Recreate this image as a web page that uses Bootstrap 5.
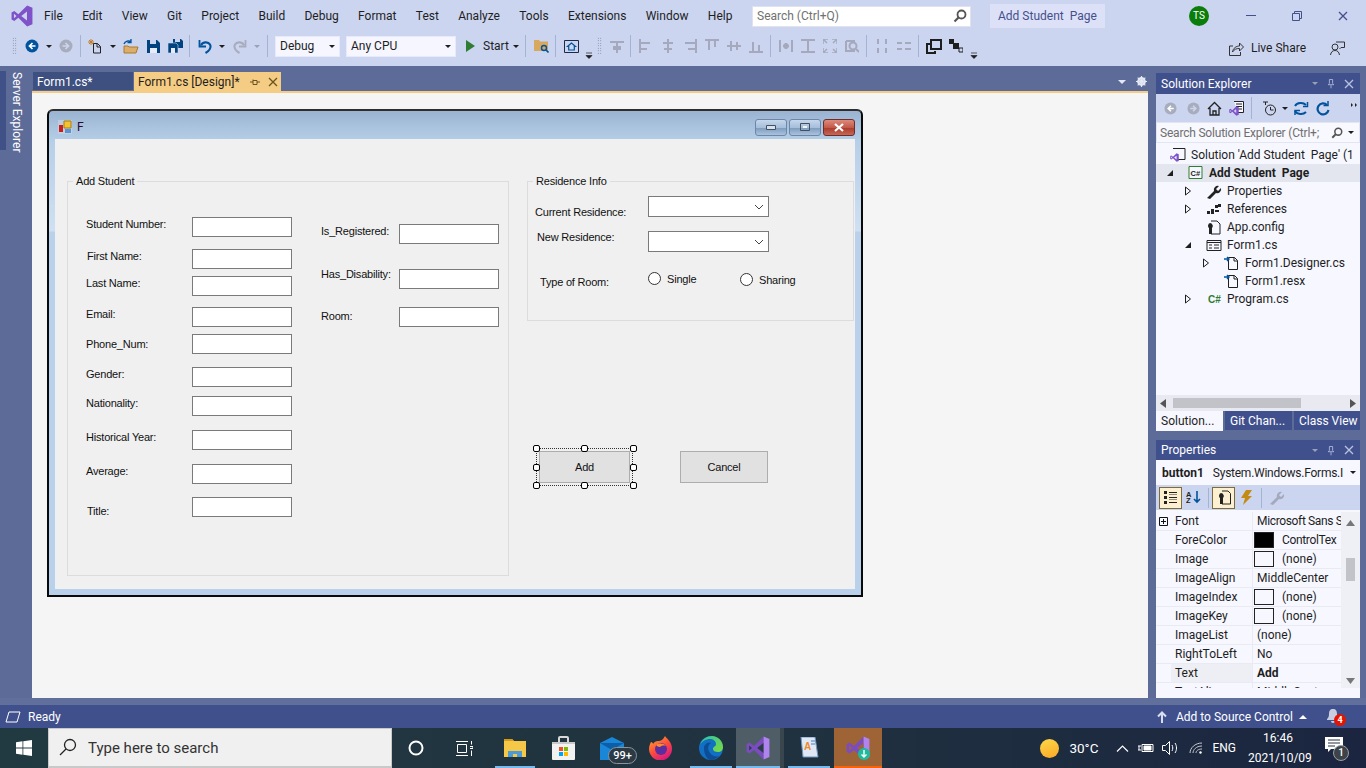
<!DOCTYPE html>
<html lang="en">
<head>
<meta charset="utf-8">
<title>Add Student Page - Visual Studio</title>
<link href="https://cdn.jsdelivr.net/npm/bootstrap@5.3.0/dist/css/bootstrap.min.css" rel="stylesheet">
<style>
html,body{margin:0;height:768px;overflow:hidden}
body{font-family:Roboto,"Noto Sans",sans-serif;font-size:12px;line-height:16px;color:#1e1e1e;background:#5d6b99}
svg{display:block;flex:none}
.vs-app{width:1366px;height:768px}
.menu-row{height:32px;background:#ccd5f0;padding-left:11px;flex:none}
.menu-items{margin-left:11px;gap:19.3px;flex:none;width:708px}
.search-q{width:219px;height:21px;margin-left:0;background:#fff;border:1px solid #e0e3ef;color:#717171;padding:0 3px 0 4px;flex:none}
.title-chip{width:115px;height:24px;margin-left:19px;background:#dde1f8;color:#44508c;padding-left:8px;flex:none}
.avatar{width:20px;height:20px;margin-left:84px;border-radius:50%;background:#0b7d0b;color:#fff;font-size:10px;flex:none}
.win-btn{width:46px;height:32px;flex:none}
.win-first{margin-left:19px}
.tool-row{height:34px;background:#ccd5f0;padding-bottom:6px;flex:none}
.cw1{width:1px}.cw2{width:2px}.cw3{width:3px}.cw4{width:4px}.cw5{width:5px}.cw6{width:6px}.cw7{width:7px}.cw10{width:10px}.cw12{width:12px}.cw14{width:14px}.cw16{width:16px}.cw18{width:18px}.cw20{width:20px}.cw22{width:22px}.cw26{width:26px}
.cw1,.cw2,.cw3,.cw4,.cw5,.cw6,.cw7,.cw10,.cw12,.cw14,.cw16,.cw18,.cw20,.cw22,.cw26{flex:none}
.tcell{height:28px;flex:none}
.tsep{width:1px;height:22px;background:#a5b3d3;flex:none}
.grip{width:5px;height:18px;flex:none;background-image:radial-gradient(#6f7a9a 35%,transparent 40%);background-size:2.5px 2.5px}
.combo{height:21px;background:#f5f6ff;border:1px solid #e6eafa;flex:none;padding:0 4px}
.combo-a{width:65px}.combo-b{width:110px}
.drop{width:0;height:0;border-left:3px solid transparent;border-right:3px solid transparent;border-top:3px solid #1e1e1e;flex:none}
.drop-g{border-top-color:#9aa0b5}
.drop-w{border-left-width:4px;border-right-width:4px;border-top:4px solid #e4e8f5}
.start-txt{width:26px;flex:none}
.live-txt{margin:0 24px 0 7px}
.feedback{margin-right:21px}
.overflow-mark{margin-right:3px}
.share{margin-top:4px}
.main-row{height:632px;flex:none}
.left-strip{width:32px;padding-top:5px;flex:none}
.strip-tab{width:6px;height:79px;background:#3f5186}
.strip-txt{writing-mode:vertical-rl;color:#fff;margin:1px 0 0 4px;line-height:14px}
.center-col{width:1116px;margin-right:8px;flex:none}
.tabs-row{height:25px;padding-top:6px;flex:none}
.doc-tab{height:19px;padding:1px 0 0 4px;flex:none}
.doc-a{width:100px;background:#3d5080;color:#fff;margin:0 1px 0 1px;height:18px}
.doc-b{width:147px;background:#f5cc84;color:#1e1e1e;height:19px}
.doc-b .x-pin{margin-left:10px}
.doc-b .x-cl{margin-left:8px}
.tabs-end{margin-right:1px;gap:10px}
.doc-area{height:607px;background:#f5f5f5;border-top:2px solid #f5cc84;padding:16px 0 0 15px;flex:none}
.winform{width:816px;height:488px;border:2px solid #0a0a0a;border-top-color:#2e2e2e;border-radius:6px 6px 0 0;padding:0 6px 6px;background:linear-gradient(#9ab3d1 0,#b6cfe8 30px,#cfe0f2 120px,#b9d1ea 121px)}
.form-title{height:28px;padding:4px 0 0 3px}
.form-f{margin-left:5px;color:#2a0a2a}
.wb{width:32px;height:17px;margin-right:2px;border:1px solid #6e87a8;border-radius:3px;background:linear-gradient(#c5d7ec,#a6bfdb 50%,#7d9abb 51%,#a9c3de)}
.wb-close{background:linear-gradient(#dd8a7c,#c45a49 50%,#a93a2a 51%,#c56757);border-color:#6f2d2a;margin-right:0}
.client{height:450px;background:#f0f0f0;position:relative;font-family:"Liberation Sans",Arial,sans-serif;font-size:11px;letter-spacing:-.2px;line-height:14px;color:#111}
.gbox{position:absolute;border:1px solid #dcdcdc;top:42px}
.g1{left:12px;width:442px;height:395px}
.g2{left:472px;width:327px;height:140px}
.gleg{position:absolute;top:-8px;left:5px;background:#f0f0f0;padding:0 3px}
.lb,.tx,.cb,.rd,.fbtn,.hd,.seln{position:absolute}
.tx{width:100px;height:20px;background:#fff;border:1px solid #7a7a7a}
.cb{left:593px;width:121px;height:21px;background:#fff;border:1px solid #7a7a7a}
.cb svg{position:absolute;right:4px;top:7px}
.rd{width:13px;height:13px;border-radius:50%;border:1px solid #333;background:#fff}
.fbtn{top:312px;height:32px;background:#e1e1e1;border:1px solid #adadad;color:#111}
.seln{left:481px;top:309px;width:97px;height:38px;border:1px dotted #333}
.hd{width:7px;height:7px;background:#fff;border:1px solid #000;border-radius:2px}
.xl1{left:31px}.xl2{left:32px}.xr{left:266px}.xt{left:137px}.xs{left:344px}
.ya{top:78px}.yb{top:110px}.yc{top:137px}.yd{top:168px}.ye{top:195px}.yf{top:228px}.yg{top:257px}.yh{top:291px}.yi{top:325px}.yj{top:358px}
.yr1{top:85px}.yr2{top:130px}.yr3{top:168px}
.la{top:78px}.lb2{top:110px}.lc{top:137px}.ld{top:168px}.le{top:198px}.lf{top:228px}.lg{top:257px}.lh{top:291px}.li{top:325px}.lj{top:365px}
.lr1{top:85px}.lr2{top:128px}.lr3{top:170px}
.l-cur{left:480px;top:66px}.l-new{left:482px;top:91px}.l-typ{left:485px;top:136px}
.cb1{top:57px}.cb2{top:92px}
.rd1{left:593px;top:133px}.rd2{left:685px;top:134px}
.l-sin{left:612px;top:133px}.l-sha{left:704px;top:134px}
.b-add{left:484px;width:91px}.b-can{left:625px;width:88px}
.h1{left:478px;top:306px}.h2{left:526px;top:306px}.h3{left:575px;top:306px}
.h4{left:478px;top:325px}.h5{left:575px;top:325px}
.h6{left:478px;top:343px}.h7{left:526px;top:343px}.h8{left:575px;top:343px}
.side{width:204px;padding-top:7px;flex:none}
.ptitle{height:21px;background:#40508d;color:#fff;padding:0 5px;flex:none}
.ptitle-b{height:20px}
.ptitle-ic{gap:9px;margin-right:1px}
.se-bar{height:28px;background:#ccd5f0;padding-left:8px;flex:none}
.se-search{height:21px;background:#f8f8ff;border:1px solid #e3e6f2;color:#6f6f6f;padding:0 2px 0 3px;white-space:nowrap;overflow:hidden;flex:none}
.se-search span.q{width:163px;overflow:hidden;flex:none;letter-spacing:-.2px}
.tree{height:252px;background:#f6f7ff;color:#1e1e1e;white-space:nowrap;overflow:hidden;padding-top:3px;flex:none}
.trow{height:18px;flex:none;overflow:hidden}
.trow-sel{background:#e4e6ef;font-weight:700}
.tr-tog{width:8px;flex:none}
.ticon{width:16px;flex:none}
.tname{margin-left:5px}
.hbar{height:16px;background:#e9eaf1;padding:0 4px;flex:none}
.hthumb{width:128px;height:10px;background:#c2c3c9;margin-left:7px}
.hspace{flex:1 1 auto}
.stabs{height:20px;gap:2px;flex:none}
.stab{background:#40508d;color:#fff;height:19px;padding-left:5px;flex:none;white-space:nowrap}
.st1{width:67px;background:#f6f7ff;color:#1e1e1e;height:20px}
.st2{width:67px;margin-left:0}.st3{width:66px}
.props-gap{height:9px;flex:none}
.obj-row{height:25px;background:#f6f7ff;padding-left:6px;white-space:nowrap;overflow:hidden;flex:none}
.obj-row b{margin-right:9px}
.obj-row span.tp{width:134px;overflow:hidden;flex:none;letter-spacing:-.25px}
.pbar{height:25px;background:#ccd5f0;padding-left:3px;flex:none}
.pbtn{width:23px;height:22px;flex:none}
.pbtn-on{background:#fdf0d0;border:1px solid #7d6c3a}
.ptsep{width:1px;height:20px;background:#a5b3d3;margin:0 3px;flex:none}
.pgrid{height:178px;background:#f6f7ff;padding-top:2px;overflow:hidden;flex:none}
.pg-left{width:185px;flex:none;overflow:hidden}
.prow{height:19px;flex:none;border-bottom:1px solid #eaebf2;overflow:hidden;white-space:nowrap}
.pgut{width:15px;flex:none;background:#f6f7ff}
.pn{width:82px;flex:none;padding-left:4px;border-right:1px solid #eaebf2;height:18px;line-height:18px}
.pv{width:88px;flex:none;overflow:hidden;padding-left:4px;height:18px;line-height:18px}
.pv-sw{padding-left:1px}
.pv-tight{letter-spacing:-.35px}
.pn-sel{background:#eeeff4}
.pv-sel{font-weight:700}
.sw{width:20px;height:16px;border:1px solid #222;background:#f6f7ff;flex:none;margin-right:8px}
.sw-k{background:#000}
.pscroll{width:19px;flex:none;background:#eef0f6}
.pthumb{width:9px;height:23px;background:#c2c3c9;margin-top:32px}
.pfoot{height:10px;background:#f6f7ff;flex:none}
.status-gap{height:7px;background:#606f9c;flex:none}
.status{height:23px;background:#40508d;color:#fff;padding:0 0 0 5px;flex:none}
.st-ready{margin-left:7px}
.st-src{margin:0 6px 0 9px}
.bell{margin:0 26px 0 19px;position:relative}
.bell-b{position:absolute;left:8px;top:5px;width:12px;height:12px;border-radius:50%;background:#e51400;font-size:9px;line-height:12px;font-weight:700;text-align:center}
.taskbar{height:40px;background:linear-gradient(90deg,#213a42,#20323f 55%,#1b2540);color:#fff;padding:0;flex:none}
.tb-start{width:48px;flex:none}
.tb-search{width:344px;height:40px;background:#f0f0f0;border:1px solid #c9c9c9;border-bottom-width:2px;color:#333;font-size:15px;padding-left:39px;position:relative;flex:none}
.tb-search svg{position:absolute;left:10px;top:9px}
.tk{height:40px;flex:none;position:relative}
.tk48{width:48px}.tk49{width:49px}.tk50{width:50px}.tk44{width:44px}.tk4{width:4px}
.ul::after{content:"";position:absolute;left:4px;right:4px;bottom:0;height:2px;background:#76b9ed}
.ul-wide::after{left:0;right:-2px}
.tk-act{background:#4f5e66}
.tk-sep{background:#3a464e}
.tk-org{background:#9f6436}
.tk-org::after{content:"";position:absolute;left:0;right:0;bottom:0;height:2px;background:#f7630c}
.bdg99{position:absolute;left:21px;top:19px;width:29px;height:17px;border-radius:9px;background:#2b3a45;border:1px solid #8b949a;font-size:11px;line-height:15px;text-align:center;font-weight:500;color:#fff}
.sun{width:19px;height:19px;border-radius:50%;background:linear-gradient(160deg,#ffd84a,#f9a825);flex:none}
.temp{margin-left:10px;font-size:13.5px}
.gap-l18{margin-left:18px}
.gap-r8{margin-right:8px}.gap-r9{margin-right:9px}.gap-r11{margin-right:11px}
.clock{width:60px;text-align:center;font-size:12px;line-height:20px;margin-left:12px;flex:none}
.noti{position:relative;width:22px;height:22px;margin:0 19px 0 17px;flex:none}
.noti-b{position:absolute;left:8px;top:8px;width:16px;height:16px;border-radius:50%;background:#3d4348;border:1px solid #9aa0a4;font-size:10px;line-height:14px;text-align:center;font-weight:500}
.nowrap{white-space:nowrap}
</style>
</head>
<body>
<svg width="0" height="0" class="position-absolute">
  <symbol id="vs" viewBox="0 0 24 24"><path d="M17.6.6 8 10 3.6 6.6.6 8.2v7.600l3 1.600L8 14l9.600 9.400 5.800-2.400V3zM17.400 7v10l-6.200-5zM3.200 9.600 6 12l-2.800 2.400z"/></symbol>
  <symbol id="doc" viewBox="0 0 16 16"><path d="M4.500 2.500h6l3 3v9h-9z" fill="#f6f7ff" stroke="#1e1e1e"/><path d="M10 2.500v3.500h3.500" fill="none" stroke="#1e1e1e"/><path d="M0 4h5M3 2l2 2-2 2" fill="none" stroke="#00539c" stroke-width="1.400"/></symbol>
  <symbol id="tgr" viewBox="0 0 8 10"><path d="M1.500 1l5 4-5 4z" fill="#f6f7ff" stroke="#1e1e1e"/></symbol>
  <symbol id="tgd" viewBox="0 0 8 10"><path d="M7 2v6H1z" fill="#1e1e1e"/></symbol>
  <symbol id="pin" viewBox="0 0 10 12"><path d="M3 1h4v5l1.500 1.500h-7L3 6zM5 8v4" fill="none" stroke="currentColor"/></symbol>
  <symbol id="xx" viewBox="0 0 10 10"><path d="M1 1l8 8M9 1l-8 8" stroke="currentColor" stroke-width="1.300"/></symbol>
  <symbol id="navb" viewBox="0 0 14 14"><circle cx="7" cy="7" r="6.500" fill="currentColor"/><path d="M10.500 7H5M7.500 4 4.500 7l3 3" fill="none" stroke="#fff" stroke-width="1.700"/></symbol>
  <symbol id="navf" viewBox="0 0 14 14"><circle cx="7" cy="7" r="6.500" fill="currentColor"/><path d="M3.500 7H9M6.500 4l3 3-3 3" fill="none" stroke="#ccd5f0" stroke-width="1.700"/></symbol>
  <symbol id="mag" viewBox="0 0 14 14"><circle cx="8.500" cy="5.500" r="4" fill="none" stroke="currentColor" stroke-width="1.800"/><path d="M5.500 8.500 1.500 12.500" stroke="currentColor" stroke-width="2.200"/></symbol>
  <symbol id="vsall" viewBox="0 0 24 24"><path d="M17.600.6 8 10 3.600 6.600.6 8.200v7.600l3 1.600L8 14l9.600 9.400V.6z" fill="#7a4cc0"/><path d="M17.600.6l5.800 2.400v18l-5.800 2.400z" fill="#b084ee"/><path d="M17.400 7v10l-6.200-5zM3.200 9.600 6 12l-2.800 2.400z" fill="#2a3d46"/></symbol>
</svg>
<div class="vs-app d-flex flex-column">

  <!-- menu -->
  <div class="menu-row d-flex align-items-center">
    <svg width="22" height="22" fill="#7f52c9"><use href="#vs"/></svg>
    <div class="menu-items d-flex">
      <span>File</span><span>Edit</span><span>View</span><span>Git</span><span>Project</span><span>Build</span><span>Debug</span><span>Format</span><span>Test</span><span>Analyze</span><span>Tools</span><span>Extensions</span><span>Window</span><span>Help</span>
    </div>
    <div class="search-q d-flex align-items-center justify-content-between"><span>Search (Ctrl+Q)</span><svg width="14" height="14" color="#555"><use href="#mag"/></svg></div>
    <div class="title-chip d-flex align-items-center nowrap">Add Student&nbsp; Page</div>
    <div class="avatar d-flex align-items-center justify-content-center">TS</div>
    <div class="win-btn win-first d-flex align-items-center justify-content-center"><svg width="10" height="2"><path d="M0 .5h10" stroke="#44508c"/></svg></div>
    <div class="win-btn d-flex align-items-center justify-content-center"><svg width="10" height="10" fill="none" stroke="#44508c"><path d="M.5 2.500h7v7h-7zM2.500 2.500v-2h7v7h-2"/></svg></div>
    <div class="win-btn d-flex align-items-center justify-content-center"><svg width="10" height="10" color="#44508c"><use href="#xx"/></svg></div>
  </div>

  <!-- toolbar -->
  <div class="tool-row d-flex align-items-center">
    <span class="cw12 tcell"></span><span class="grip"></span><span class="cw7 tcell"></span>
    <span class="cw16 tcell d-flex align-items-center justify-content-center"><svg width="14" height="14" color="#00539c"><use href="#navb"/></svg></span>
    <span class="cw18 tcell d-flex align-items-center justify-content-center"><span class="drop"></span></span>
    <span class="cw16 tcell d-flex align-items-center justify-content-center"><svg width="14" height="14" color="#a7adbc"><use href="#navf"/></svg></span>
    <span class="cw6 tcell"></span><span class="tsep"></span><span class="cw7 tcell"></span>
    <span class="cw16 tcell d-flex align-items-center justify-content-center"><svg width="16" height="16" fill="none" stroke="#222"><path d="M5.500 5.500h4l3 3v6.500h-7z"/><path d="M9 5.500V9h3.500"/><path d="M3 1v6M0 4h6M1 2l4 4M5 2 1 6" stroke="#c27d1a"/></svg></span>
    <span class="cw18 tcell d-flex align-items-center justify-content-center"><span class="drop"></span></span>
    <span class="cw18 tcell d-flex align-items-center justify-content-center"><svg width="16" height="15"><path d="M1 7h4l1 1h9l-2 6H1z" fill="#dcae6a" stroke="#a87a30"/><path d="M1 5c1-3 5-4 7-2M8 0v3.500H4.500" fill="none" stroke="#00539c" stroke-width="1.300"/></svg></span>
    <span class="cw26 tcell d-flex align-items-center justify-content-center"><svg width="13" height="13"><path d="M0 0h10l3 3v10H0z" fill="#00437e"/><path d="M3 0h6v4H3z" fill="#ccd5f0"/><path d="M3 8h7v5H3z" fill="#e8ecfa"/></svg></span>
    <span class="cw18 tcell d-flex align-items-center justify-content-center"><svg width="15" height="14"><path d="M5 0h8l2 2v7H5z" fill="#00437e"/><path d="M7 0h5v3H7z" fill="#ccd5f0"/><path d="M0 4h8l2 2v8H0z" fill="#00437e" stroke="#ccd5f0" stroke-width=".6"/><path d="M3 9h4v5H3z" fill="#e8ecfa"/></svg></span>
    <span class="cw5 tcell"></span><span class="tsep"></span><span class="cw7 tcell"></span>
    <span class="cw16 tcell d-flex align-items-center justify-content-center"><svg width="14" height="15" fill="none" stroke="#00539c" stroke-width="2.200"><path d="M3 6.500c1-3.500 7-4.500 9-1 1.500 3-1 6.500-4.500 8.500"/><path d="M1.500 1v6.500H8" stroke-width="1.800"/></svg></span>
    <span class="cw18 tcell d-flex align-items-center justify-content-center"><span class="drop"></span></span>
    <span class="cw18 tcell d-flex align-items-center justify-content-center"><svg width="14" height="15" fill="none" stroke="#a7adbc" stroke-width="2.200"><path d="M11 6.500c-1-3.500-7-4.500-9-1-1.500 3 1 6.500 4.500 8.500"/><path d="M12.500 1v6.500H6" stroke-width="1.800"/></svg></span>
    <span class="cw16 tcell d-flex align-items-center justify-content-center"><span class="drop drop-g"></span></span>
    <span class="cw2 tcell"></span><span class="tsep"></span><span class="cw7 tcell"></span>
    <div class="combo combo-a d-flex align-items-center justify-content-between"><span>Debug</span><span class="drop"></span></div>
    <span class="cw6 tcell"></span>
    <div class="combo combo-b d-flex align-items-center justify-content-between"><span>Any CPU</span><span class="drop"></span></div>
    <span class="cw10 tcell"></span>
    <span class="cw10 tcell d-flex align-items-center"><svg width="10" height="12"><path d="M0 0l9 6-9 6z" fill="#2e7d32"/></svg></span>
    <span class="cw7 tcell"></span>
    <span class="start-txt">Start</span>
    <span class="cw14 tcell d-flex align-items-center justify-content-center"><span class="drop"></span></span>
    <span class="cw2 tcell"></span><span class="tsep"></span><span class="cw7 tcell"></span>
    <span class="cw16 tcell d-flex align-items-center justify-content-center"><svg width="15" height="14"><path d="M0 1h5l1 1.500h8V12H0z" fill="#d8a85f"/><circle cx="10" cy="9" r="2.500" fill="none" stroke="#00539c" stroke-width="1.400"/><path d="M12 11l2.500 2.500" stroke="#00539c" stroke-width="1.600"/></svg></span>
    <span class="cw6 tcell"></span><span class="tsep"></span><span class="cw7 tcell"></span>
    <span class="cw16 tcell d-flex align-items-center justify-content-center"><svg width="15" height="13" fill="none"><path d="M.5.500h14v12H.5z" stroke="#1e2a45"/><path d="M7.500 3 3.500 6.500h1.200V10H10.300V6.500h1.200z" stroke="#00539c" stroke-width="1.200"/></svg></span>
    <span class="cw4 tcell"></span>
    <span class="cw12 tcell d-flex align-items-end justify-content-center"><svg width="8" height="16"><path d="M1 9h6M1 11.500h6l-3 3z" fill="#1e1e1e" stroke="#1e1e1e" stroke-width=".7"/></svg></span>
    <span class="cw2 tcell"></span><span class="grip"></span><span class="cw5 tcell"></span>
    <span class="cw20 tcell d-flex align-items-center justify-content-center"><svg width="14" height="14" fill="none" stroke="#a4a9bd" stroke-width="2"><path d="M0 3h14M7 3v11"/><path d="M3 7h8v4H3z" stroke-width="0" fill="#a4a9bd"/></svg></span>
    <span class="cw3 tcell"></span><span class="tsep"></span><span class="cw4 tcell"></span>
    <span class="cw22 tcell d-flex align-items-center justify-content-center"><svg width="14" height="14" fill="none" stroke="#a4a9bd" stroke-width="2"><path d="M1 0v14M2 4h9M2 10h6"/></svg></span>
    <span class="cw22 tcell d-flex align-items-center justify-content-center"><svg width="14" height="14" fill="none" stroke="#a4a9bd" stroke-width="2"><path d="M7 0v14M2 4h10M3 10h8"/></svg></span>
    <span class="cw22 tcell d-flex align-items-center justify-content-center"><svg width="14" height="14" fill="none" stroke="#a4a9bd" stroke-width="2"><path d="M13 0v14M2 4h10M5 10h7"/></svg></span>
    <span class="cw22 tcell d-flex align-items-center justify-content-center"><svg width="14" height="14" fill="none" stroke="#a4a9bd" stroke-width="2"><path d="M0 1h14M4 2v9M10 2v6"/></svg></span>
    <span class="cw22 tcell d-flex align-items-center justify-content-center"><svg width="14" height="14" fill="none" stroke="#a4a9bd" stroke-width="2"><path d="M0 7h14M4 2v10M10 3v8"/></svg></span>
    <span class="cw22 tcell d-flex align-items-center justify-content-center"><svg width="14" height="14" fill="none" stroke="#a4a9bd" stroke-width="2"><path d="M0 13h14M4 3v9M10 6v6"/></svg></span>
    <span class="cw3 tcell"></span><span class="tsep"></span><span class="cw4 tcell"></span>
    <span class="cw22 tcell d-flex align-items-center justify-content-center"><svg width="14" height="14" fill="none" stroke="#a4a9bd" stroke-width="2"><path d="M1 1v12M13 1v12M4 7h6M7 4v6M5 5l4 4M9 5 5 9"/></svg></span>
    <span class="cw22 tcell d-flex align-items-center justify-content-center"><svg width="14" height="14" fill="none" stroke="#a4a9bd" stroke-width="2"><path d="M0 1h14M0 13h14M7 2v10"/></svg></span>
    <span class="cw22 tcell d-flex align-items-center justify-content-center"><svg width="14" height="14" fill="none" stroke="#a4a9bd" stroke-width="1.500"><path d="M0 5V0h5M9 0h5v5M14 9v5H9M5 14H0V9M1 1l3 3M13 1l-3 3M13 13l-3-3M1 13l3-3"/></svg></span>
    <span class="cw22 tcell d-flex align-items-center justify-content-center"><svg width="14" height="14" fill="none" stroke="#a4a9bd" stroke-width="2"><path d="M1 2h9M1 2v10h9"/><circle cx="8" cy="7" r="3.500"/><path d="M11 10l3 3"/></svg></span>
    <span class="cw3 tcell"></span><span class="tsep"></span><span class="cw4 tcell"></span>
    <span class="cw22 tcell d-flex align-items-center justify-content-center"><svg width="14" height="14" fill="none" stroke="#a4a9bd" stroke-width="2"><path d="M3 0v5M3 9v5M11 0v5M11 9v5"/></svg></span>
    <span class="cw22 tcell d-flex align-items-center justify-content-center"><svg width="14" height="14" fill="none" stroke="#a4a9bd" stroke-width="2"><path d="M0 4h5M8 4h6M0 10h5M8 10h6"/></svg></span>
    <span class="cw3 tcell"></span><span class="tsep"></span><span class="cw4 tcell"></span>
    <span class="cw22 tcell d-flex align-items-center justify-content-center"><svg width="16" height="15" fill="none" stroke="#1e1e1e" stroke-width="2"><path d="M5 1h10v9H5z"/><path d="M4 5H1v9h8v-2"/></svg></span>
    <span class="cw22 tcell d-flex align-items-center justify-content-center"><svg width="14" height="14" fill="#1e1e1e"><path d="M0 0h5v5H0zM4 4h6v6H4z"/><path d="M10 9h4v4h-4z" fill="none" stroke="#1e1e1e"/></svg></span>
    <span class="cw14 tcell d-flex align-items-end justify-content-center"><svg width="8" height="16"><path d="M1 9h6M1 11.500h6l-3 3z" fill="#1e1e1e" stroke="#1e1e1e" stroke-width=".7"/></svg></span>
    <span class="flex-grow-1"></span>
    <svg class="share" width="15" height="15" fill="none" stroke="#333"><path d="M4 5H.5v9.500h11V11"/><path d="M3.500 11c.5-4 4-6 7-6V2l4 4-4 4V7.500c-3-.2-5.500 1-7 3.500z"/></svg>
    <span class="live-txt share nowrap">Live Share</span>
    <svg class="feedback share" width="15" height="15" fill="none" stroke="#333"><circle cx="5" cy="6" r="3"/><path d="M.5 14c.5-3 2-4.500 4.500-4.500s4 1.500 4.500 4.500M6 1h8.500v5.500H11L9.500 8"/></svg>
  </div>

  <!-- workspace -->
  <div class="main-row d-flex">
    <div class="left-strip d-flex">
      <div class="strip-tab"></div>
      <div class="strip-txt nowrap">Server Explorer</div>
    </div>

    <div class="center-col d-flex flex-column">
      <div class="tabs-row d-flex">
        <div class="doc-tab doc-a d-flex align-items-center">Form1.cs*</div>
        <div class="doc-tab doc-b d-flex align-items-center nowrap">Form1.cs [Design]*
          <svg class="x-pin" width="10" height="10" color="#6b5320" viewBox="0 0 10 10"><path d="M0 5h3M3 2.500v5h4v-4H3M7 5h3" fill="none" stroke="currentColor"/></svg>
          <svg class="x-cl" width="10" height="10" color="#6b5320"><use href="#xx"/></svg>
        </div>
        <div class="flex-grow-1"></div>
        <div class="tabs-end d-flex align-items-center">
          <span class="drop drop-w"></span>
          <svg width="11" height="11" viewBox="0 0 12 12"><circle cx="6" cy="6" r="3.500" fill="none" stroke="#e4e8f5" stroke-width="2.600"/><path d="M6 0v12M0 6h12M1.800 1.800l8.400 8.400M10.200 1.800l-8.400 8.400" stroke="#e4e8f5" stroke-width="1.300"/></svg>
        </div>
      </div>
      <div class="doc-area">
        <div class="winform">
          <div class="form-title d-flex align-items-center">
            <svg width="14" height="14"><path d="M0 0h14v14H0z" fill="#cfd6de" opacity=".6"/><path d="M1 5h4v7H1z" fill="#c81e1e"/><path d="M6 1h7v7H6z" fill="#f4c430" stroke="#a87a10"/><path d="M7 9h6v4H7z" fill="#5b93d9"/></svg>
            <span class="form-f">F</span>
            <span class="flex-grow-1"></span>
            <span class="wb d-flex align-items-center justify-content-center"><svg width="10" height="5"><path d="M.5.500h9v4h-9z" fill="#d8e2ee" stroke="#44505f"/></svg></span>
            <span class="wb d-flex align-items-center justify-content-center"><svg width="10" height="8"><path d="M.5.500h9v7h-9z" fill="none" stroke="#44505f"/><path d="M3 3h4v2H3z" fill="#f2f6fb"/></svg></span>
            <span class="wb wb-close d-flex align-items-center justify-content-center"><svg width="12" height="9"><path d="M2 1l8 7M10 1 2 8" stroke="#fff" stroke-width="2.200"/></svg></span>
          </div>
          <div class="client">
            <div class="gbox g1"><span class="gleg">Add Student</span></div>
            <div class="gbox g2"><span class="gleg">Residence Info</span></div>

            <span class="lb xl1 la">Student Number:</span><div class="tx xt ya"></div>
            <span class="lb xl2 lb2">First Name:</span><div class="tx xt yb"></div>
            <span class="lb xl1 lc">Last Name:</span><div class="tx xt yc"></div>
            <span class="lb xl1 ld">Email:</span><div class="tx xt yd"></div>
            <span class="lb xl1 le">Phone_Num:</span><div class="tx xt ye"></div>
            <span class="lb xl1 lf">Gender:</span><div class="tx xt yf"></div>
            <span class="lb xl1 lg">Nationality:</span><div class="tx xt yg"></div>
            <span class="lb xl1 lh">Historical Year:</span><div class="tx xt yh"></div>
            <span class="lb xl1 li">Average:</span><div class="tx xt yi"></div>
            <span class="lb xl2 lj">Title:</span><div class="tx xt yj"></div>

            <span class="lb xr lr1">Is_Registered:</span><div class="tx xs yr1"></div>
            <span class="lb xr lr2">Has_Disability:</span><div class="tx xs yr2"></div>
            <span class="lb xr lr3">Room:</span><div class="tx xs yr3"></div>

            <span class="lb l-cur">Current Residence:</span>
            <div class="cb cb1"><svg width="10" height="6" fill="none" stroke="#444"><path d="M1 1l4 4 4-4"/></svg></div>
            <span class="lb l-new">New Residence:</span>
            <div class="cb cb2"><svg width="10" height="6" fill="none" stroke="#444"><path d="M1 1l4 4 4-4"/></svg></div>
            <span class="lb l-typ">Type of Room:</span>
            <span class="rd rd1"></span><span class="lb l-sin">Single</span>
            <span class="rd rd2"></span><span class="lb l-sha">Sharing</span>

            <div class="seln"></div>
            <div class="fbtn b-add d-flex align-items-center justify-content-center">Add</div>
            <div class="fbtn b-can d-flex align-items-center justify-content-center">Cancel</div>
            <span class="hd h1"></span><span class="hd h2"></span><span class="hd h3"></span>
            <span class="hd h4"></span><span class="hd h5"></span>
            <span class="hd h6"></span><span class="hd h7"></span><span class="hd h8"></span>
          </div>
        </div>
      </div>
    </div>

    <div class="side d-flex flex-column">
      <div class="ptitle d-flex align-items-center justify-content-between">
        <span>Solution Explorer</span>
        <span class="ptitle-ic d-flex align-items-center"><span class="drop drop-g"></span><svg width="8" height="11" color="#b9c3e0"><use href="#pin"/></svg><svg width="10" height="10" color="#b9c3e0"><use href="#xx"/></svg></span>
      </div>
      <div class="se-bar d-flex align-items-center">
        <svg width="13" height="13" color="#a7adbc"><use href="#navb"/></svg>
        <span class="cw10"></span>
        <svg width="13" height="13" color="#a7adbc"><use href="#navf"/></svg>
        <span class="cw7"></span>
        <svg width="15" height="15" fill="none" stroke="#222" stroke-width="1.300"><path d="M1 8l6.500-6.500L14 8M3 7v7h9V7M6 14v-4h3v4"/></svg>
        <span class="cw7"></span>
        <svg width="15" height="15"><path d="M5 .5h9.500v11H9" fill="#f6f7ff" stroke="#222"/><path d="M7 3h6M7 5.500h6M7 8h6" stroke="#222"/><use href="#vs" width="10" height="10" y="5" fill="#7f52c9"/></svg>
        <span class="cw7"></span><span class="tsep"></span><span class="cw10"></span>
        <svg width="15" height="15" fill="none" stroke="#222"><circle cx="8.500" cy="9" r="5"/><path d="M8.500 6v3h3M1 1h5M3.500 1v3"/></svg>
        <span class="cw5"></span><span class="drop"></span><span class="cw6"></span>
        <svg width="15" height="15" fill="none" stroke="#00539c" stroke-width="2"><path d="M1 5c2-3.500 8-4 11-1M1 10c2 3.500 8 4 11 1"/><path d="M13.500 1v4.500H9M1 14V9.500h5" stroke-width="1.500"/></svg>
        <span class="cw7"></span>
        <svg width="14" height="15" fill="none" stroke="#00539c" stroke-width="2.200"><path d="M11 4A5.500 5.500 0 1 0 12.500 9"/><path d="M12 0v4.500H7.500" stroke-width="1.500"/></svg>
        <span class="flex-grow-1"></span>
        <svg class="overflow-mark" width="6" height="12" viewBox="0 0 6 12"><path d="M0 1l2 2-2 2zM4 1l2 2-2 2z" fill="#222"/></svg>
      </div>
      <div class="se-search d-flex align-items-center">
        <span class="q">Search Solution Explorer (Ctrl+;</span>
        <svg class="ms-auto" width="12" height="12" color="#555"><use href="#mag"/></svg>
        <span class="cw5"></span><span class="drop"></span><span class="cw3"></span>
      </div>
      <div class="tree d-flex flex-column">
        <div class="trow d-flex align-items-center"><span class="cw14"></span><svg class="ticon" height="14"><path d="M3 .5h12v11H8" fill="none" stroke="#222"/><use href="#vs" width="9" height="9" y="5" fill="#7f52c9"/></svg><span class="tname">Solution 'Add Student&nbsp; Page' (1</span></div>
        <div class="trow trow-sel d-flex align-items-center"><span class="cw10"></span><svg class="tr-tog" height="10"><use href="#tgd"/></svg><span class="cw14"></span><svg class="ticon" height="14" viewBox="0 0 16 14"><path d="M1 .5h13v12H1z" fill="#f6f7ff" stroke="#2e7d32"/><text x="2.500" y="9.500" font-size="7.500" font-family="Liberation Sans" fill="#222">C#</text></svg><span class="tname">Add Student&nbsp; Page</span></div>
        <div class="trow d-flex align-items-center"><span class="cw14"></span><span class="cw14"></span><svg class="tr-tog" height="10"><use href="#tgr"/></svg><span class="cw14"></span><svg class="ticon" height="15"><path d="M1 14 8 7a4 4 0 0 1 5-5l-3 3 2 2 3-3a4 4 0 0 1-5 5l-6 6z" fill="#222"/></svg><span class="tname">Properties</span></div>
        <div class="trow d-flex align-items-center"><span class="cw14"></span><span class="cw14"></span><svg class="tr-tog" height="10"><use href="#tgr"/></svg><span class="cw14"></span><svg class="ticon" height="12"><path d="M1 8h3v3H1zM5 6h3v5H5zM9 2h3v3H9zM12 1h3v3h-3zM9 7h4v2H9z" fill="#222"/></svg><span class="tname">References</span></div>
        <div class="trow d-flex align-items-center"><span class="cw14"></span><span class="cw14"></span><span class="cw22"></span><svg class="ticon" height="15"><path d="M5 1h6l3 3v10H5" fill="#f6f7ff" stroke="#222"/><path d="M4 3a3 3 0 0 1 2 5v6H3V8a3 3 0 0 1 1-5z" fill="#222"/></svg><span class="tname">App.config</span></div>
        <div class="trow d-flex align-items-center"><span class="cw14"></span><span class="cw14"></span><svg class="tr-tog" height="10"><use href="#tgd"/></svg><span class="cw14"></span><svg class="ticon" height="13"><path d="M1 1.500h14v10H1z" fill="none" stroke="#222"/><path d="M1 3.500h14M3 6h3M3 9h3M8 6h5M8 9h5" stroke="#222"/></svg><span class="tname">Form1.cs</span></div>
        <div class="trow d-flex align-items-center"><span class="cw14"></span><span class="cw14"></span><span class="cw18"></span><svg class="tr-tog" height="10"><use href="#tgr"/></svg><span class="cw14"></span><svg class="ticon" height="16"><use href="#doc"/></svg><span class="tname">Form1.Designer.cs</span></div>
        <div class="trow d-flex align-items-center"><span class="cw14"></span><span class="cw14"></span><span class="cw18"></span><span class="cw22"></span><svg class="ticon" height="16"><use href="#doc"/></svg><span class="tname">Form1.resx</span></div>
        <div class="trow d-flex align-items-center"><span class="cw14"></span><span class="cw14"></span><svg class="tr-tog" height="10"><use href="#tgr"/></svg><span class="cw14"></span><svg class="ticon" height="12" viewBox="0 0 16 12"><text x="2" y="10" font-size="10" font-weight="700" font-family="Liberation Sans" fill="#2e7d32">C#</text></svg><span class="tname">Program.cs</span></div>
      </div>
      <div class="hbar d-flex align-items-center">
        <svg width="6" height="9"><path d="M6 0v9L0 4.500z" fill="#555"/></svg>
        <span class="hthumb"></span><span class="hspace"></span>
        <svg width="6" height="9"><path d="M0 0v9l6-4.500z" fill="#555"/></svg>
      </div>
      <div class="stabs d-flex">
        <div class="stab st1 d-flex align-items-center">Solution...</div>
        <div class="stab st2 d-flex align-items-center">Git Chan...</div>
        <div class="stab st3 d-flex align-items-center">Class View</div>
      </div>
      <div class="props-gap"></div>
      <div class="ptitle ptitle-b d-flex align-items-center justify-content-between">
        <span>Properties</span>
        <span class="ptitle-ic d-flex align-items-center"><span class="drop drop-g"></span><svg width="8" height="11" color="#b9c3e0"><use href="#pin"/></svg><svg width="10" height="10" color="#b9c3e0"><use href="#xx"/></svg></span>
      </div>
      <div class="obj-row d-flex align-items-center">
        <b>button1</b><span class="tp">System.Windows.Forms.I</span>
        <span class="cw3"></span><span class="drop"></span>
      </div>
      <div class="pbar d-flex align-items-center">
        <span class="pbtn pbtn-on d-flex align-items-center justify-content-center"><svg width="13" height="13" fill="#222"><path d="M0 0h3v3H0zM0 5h3v3H0zM0 10h3v3H0zM5 1h8v1H5zM5 6h8v1H5zM5 11h8v1H5zM5 3.500h8v.6H5zM5 8.500h8v.6H5z"/></svg></span>
        <span class="pbtn d-flex align-items-center justify-content-center"><svg width="15" height="15"><text x="0" y="6.500" font-size="7.500" font-weight="700" font-family="Liberation Sans" fill="#222">A</text><text x="0" y="13" font-size="7.500" font-weight="700" font-family="Liberation Sans" fill="#222">Z</text><path d="M11 1v11M8 9l3 3 3-3" fill="none" stroke="#00539c" stroke-width="1.600"/></svg></span>
        <span class="ptsep"></span>
        <span class="pbtn pbtn-on d-flex align-items-center justify-content-center"><svg width="14" height="15"><path d="M5 1h6l2.500 2.500V14H5" fill="#fdf0d0" stroke="#222"/><path d="M4 3a3 3 0 0 1 2 5v6H3V8a3 3 0 0 1 1-5z" fill="#222"/></svg></span>
        <span class="pbtn d-flex align-items-center justify-content-center"><svg width="13" height="15"><path d="M6 0h6L8 6h4L3 15l2-7H1z" fill="#c38a14"/></svg></span>
        <span class="ptsep"></span>
        <span class="pbtn d-flex align-items-center justify-content-center"><svg width="15" height="15"><path d="M1 14 8 7a4 4 0 0 1 5-5l-3 3 2 2 3-3a4 4 0 0 1-5 5l-6 6z" fill="#a4a9bd"/></svg></span>
      </div>
      <div class="pgrid d-flex">
        <div class="pg-left d-flex flex-column">
          <div class="prow d-flex"><span class="pgut d-flex align-items-center justify-content-center"><svg width="9" height="9" fill="none" stroke="#111"><path d="M.5.500h8v8h-8zM2 4.500h5M4.500 2v5"/></svg></span><span class="pn">Font</span><span class="pv pv-tight">Microsoft Sans S</span></div>
          <div class="prow d-flex"><span class="pgut"></span><span class="pn">ForeColor</span><span class="pv pv-sw pv-tight d-flex align-items-center"><span class="sw sw-k"></span>ControlTex</span></div>
          <div class="prow d-flex"><span class="pgut"></span><span class="pn">Image</span><span class="pv pv-sw d-flex align-items-center"><span class="sw"></span>(none)</span></div>
          <div class="prow d-flex"><span class="pgut"></span><span class="pn">ImageAlign</span><span class="pv">MiddleCenter</span></div>
          <div class="prow d-flex"><span class="pgut"></span><span class="pn">ImageIndex</span><span class="pv pv-sw d-flex align-items-center"><span class="sw"></span>(none)</span></div>
          <div class="prow d-flex"><span class="pgut"></span><span class="pn">ImageKey</span><span class="pv pv-sw d-flex align-items-center"><span class="sw"></span>(none)</span></div>
          <div class="prow d-flex"><span class="pgut"></span><span class="pn">ImageList</span><span class="pv">(none)</span></div>
          <div class="prow d-flex"><span class="pgut"></span><span class="pn">RightToLeft</span><span class="pv">No</span></div>
          <div class="prow d-flex"><span class="pgut"></span><span class="pn pn-sel">Text</span><span class="pv pv-sel">Add</span></div>
          <div class="prow d-flex"><span class="pgut"></span><span class="pn">TextAlign</span><span class="pv">MiddleCenter</span></div>
        </div>
        <div class="pscroll d-flex flex-column align-items-center justify-content-between pb-1 pt-2">
          <svg width="9" height="6"><path d="M0 6h9L4.500 0z" fill="#777"/></svg>
          <span class="pthumb mb-auto"></span>
          <svg width="9" height="6"><path d="M0 0h9L4.500 6z" fill="#777"/></svg>
        </div>
      </div>
      <div class="pfoot"></div>
    </div>
    <div class="cw6"></div>
  </div>

  <div class="status-gap"></div>
  <div class="status d-flex align-items-center">
    <svg width="16" height="12" fill="none" stroke="#fff"><path d="M4 1h11l-3 10H1z"/></svg>
    <span class="st-ready">Ready</span>
    <span class="flex-grow-1"></span>
    <svg width="10" height="12" fill="none" stroke="#d8dcec" stroke-width="2"><path d="M5 12V2M1 5.500 5 1.500l4 4"/></svg>
    <span class="st-src nowrap">Add to Source Control</span>
    <svg width="8" height="4"><path d="M0 4h8L4 0z" fill="#fff"/></svg>
    <span class="bell"><svg width="14" height="15"><path d="M7 0c3 0 4 2 4 5s1 4 2 5v1H1v-1c1-1 2-2 2-5s1-5 4-5zM5 12h4a2 2 0 0 1-4 0z" fill="#c8cde0"/></svg><span class="bell-b">4</span></span>
  </div>

  <!-- taskbar -->
  <div class="taskbar d-flex align-items-center">
    <div class="tb-start d-flex align-items-center justify-content-center"><svg width="16" height="16" fill="#fff"><path d="M0 2.300 6.500 1.300V7.500H0zM7.300 1.200 16 0v7.500H7.300zM0 8.400H6.500V14.700L0 13.800zM7.300 8.400H16V16L7.300 14.800z"/></svg></div>
    <div class="tb-search d-flex align-items-center">
      <svg width="18" height="18" fill="none" stroke="#222" stroke-width="1.300"><circle cx="11" cy="7" r="5.500"/><path d="M7 11 1 17"/></svg>
      Type here to search
    </div>
    <div class="tk tk48 d-flex align-items-center justify-content-center"><svg width="16" height="16" fill="none" stroke="#fff" stroke-width="2"><circle cx="8" cy="8" r="6.500"/></svg></div>
    <div class="tk tk48 d-flex align-items-center justify-content-center"><svg width="17" height="15" fill="none" stroke="#fff"><path d="M0 .5h12M0 14.500h12M1.500 3.500h9v8h-9zM15.500 0v3.500M14 5.500h3v2h-3M15.500 9.500V15"/></svg></div>
    <span class="cw3"></span>
    <div class="tk tk48 ul d-flex align-items-center justify-content-center"><svg width="22" height="18"><path d="M0 0h8l2 2h12v16H0z" fill="#f6c848"/><path d="M0 0h8l2 2H0z" fill="#d69a14"/><path d="M4 12h14v6H13v-3H9v3H4z" fill="#4a9bd8"/></svg></div>
    <div class="tk tk48 d-flex align-items-center justify-content-center"><svg width="23" height="24"><path d="M0 6h23v17a1 1 0 0 1-1 1H1a1 1 0 0 1-1-1z" fill="#f2f2f2"/><path d="M0 6h23v2H0z" fill="#c9c9c9"/><path d="M7 6V2a1 1 0 0 1 1-1h7a1 1 0 0 1 1 1v4" fill="none" stroke="#d8d8d8" stroke-width="2"/><path d="M7 11h4v4H7z" fill="#f25022"/><path d="M12 11h4v4h-4z" fill="#7fba00"/><path d="M7 16h4v4H7z" fill="#00a4ef"/><path d="M12 16h4v4h-4z" fill="#ffb900"/></svg></div>
    <div class="tk tk49 d-flex align-items-center justify-content-center"><svg width="24" height="23"><path d="M0 6 12 0l12 6v17H0z" fill="#1a86d8"/><path d="M0 6h24L12 13z" fill="#0a5fa8"/></svg><span class="bdg99">99+</span></div>
    <div class="tk tk50 d-flex align-items-center justify-content-center"><svg width="24" height="24"><defs><linearGradient id="ff" x1="0" y1="0" x2=".6" y2="1"><stop offset="0" stop-color="#ffb02e"/><stop offset=".55" stop-color="#ff4f3a"/><stop offset="1" stop-color="#d81b7c"/></linearGradient></defs><path d="M16 0c2 3 7 6 7 13a11 11 0 0 1-23 0c0-3 1-5 2-7 1 0 2 1 2 2 1-2 3-3 5-3 3 0 5-1 7-5z" fill="url(#ff)"/><circle cx="12" cy="13" r="6" fill="#5b2da0"/><path d="M7 9c3-2 7-2 10 1-3-1-5 0-6 1-2 0-3-1-4-2z" fill="#ff8a2b"/></svg></div>
    <div class="tk tk50 ul d-flex align-items-center justify-content-center"><svg width="24" height="24"><defs><linearGradient id="eg" x1="0" y1="0" x2="1" y2="1"><stop offset="0" stop-color="#2fc4a0"/><stop offset="1" stop-color="#7ddb3e"/></linearGradient></defs><circle cx="12" cy="12" r="12" fill="#1170c4"/><path d="M1 9C3 3 8 0 13 0c6 0 11 5 11 11 0 3-2 5-5 5-3 0-5-1-5-3 0-3 3-2 3-5 0-3-3-5-6-5C7 3 3 5 1 9z" fill="url(#eg)"/><path d="M5 12c0-4 4-6 7-5-3 2-4 6-1 10 2 3 6 4 9 3-2 2-5 4-8 4-4 0-7-6-7-12z" fill="#0d4d96"/></svg></div>
    <div class="tk tk44 tk-act ul ul-wide d-flex align-items-center justify-content-center"><svg width="24" height="24"><use href="#vsall"/></svg></div>
    <div class="tk tk4 tk-sep"></div>
    <div class="tk tk50 ul d-flex align-items-center justify-content-center"><svg width="20" height="22"><path d="M2 0h14l3 20H4z" fill="#dfe8f4" stroke="#6f93bd"/><text x="5" y="13" font-size="10" font-weight="700" font-family="Liberation Sans" fill="#ef8a2a">A</text><path d="M12 4h4M12 7h4" stroke="#4a7cc0"/></svg></div>
    <div class="tk tk48 tk-org d-flex align-items-center justify-content-center"><svg width="24" height="24"><path d="M17.600.6 8 10 3.600 6.600.6 8.200v7.600l3 1.600L8 14l9.600 9.400V.6z" fill="#7a4cc0"/><path d="M17.600.6l5.800 2.400v18l-5.800 2.400z" fill="#b084ee"/><path d="M17.400 7v10l-6.200-5zM3.200 9.600 6 12l-2.800 2.400z" fill="#9f6436"/><circle cx="18" cy="18" r="6" fill="#1abc9c"/><path d="M18 14v7M15.500 18.500 18 21l2.500-2.500" fill="none" stroke="#fff" stroke-width="1.400"/></svg></div>
    <span class="flex-grow-1"></span>
    <span class="sun"></span>
    <span class="temp">30°C</span>
    <svg class="gap-l18 gap-r9" width="13" height="7" fill="none" stroke="#fff" stroke-width="1.200"><path d="M1 6.500 6.500 1 12 6.500"/></svg>
    <svg class="gap-r8" width="16" height="10" fill="none" stroke="#fff"><path d="M4 1.500h11v7H4zM0 3h3M0 7h3M1 3v4" /><path d="M6 3h7v4H6z" fill="#fff"/></svg>
    <svg class="gap-r11" width="16" height="14" fill="none" stroke="#fff"><path d="M.5 4.500h3l4-4v13l-4-4h-3zM10 4c1 2 1 4 0 6M13 2c2 3 2 7 0 10"/></svg>
    <svg class="gap-r9" width="14" height="12" fill="none" stroke="#c8ccd0"><path d="M1 11C1 6 6 1 13 1M4 11c0-3 3-7 9-7M7 11c0-2 2-4 6-4"/><circle cx="11.500" cy="10.500" r="1.200" fill="#fff" stroke="none"/></svg>
    <span class="nowrap">ENG</span>
    <div class="clock"><div>16:46</div><div>2021/10/09</div></div>
    <div class="noti"><svg width="18" height="16" fill="#fff"><path d="M0 0h18v12H6l-3 3v-3H0z"/><path d="M3 3h12M3 6h12M3 9h7" stroke="#263040"/></svg><span class="noti-b">1</span></div>
  </div>
</div>
</body>
</html>
